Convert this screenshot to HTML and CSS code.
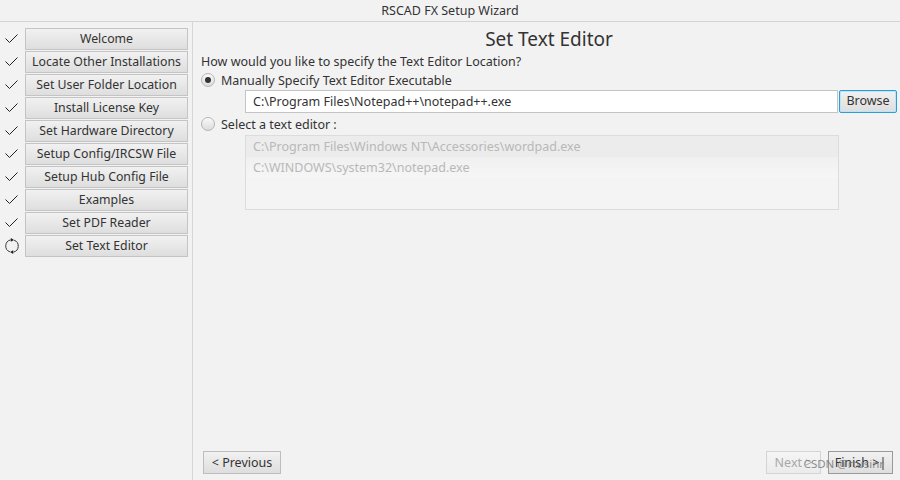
FILE: index.html
```html
<!DOCTYPE html>
<html>
<head>
<meta charset="utf-8">
<link rel="stylesheet" href="styles.css">
</head>
<body>
<div class="window">
  <div class="titlebar">RSCAD FX Setup Wizard</div>
  <div class="main">
    <div class="sidebar">
      <div class="step"><span class="mark"><svg width="16" height="16" viewBox="0 0 16 16"><path d="M1.5 7.5 L5.5 11.5 L13.5 3.5" fill="none" stroke="#222" stroke-width="1"/></svg></span><div class="stepbtn">Welcome</div></div>
      <div class="step"><span class="mark"><svg width="16" height="16" viewBox="0 0 16 16"><path d="M1.5 7.5 L5.5 11.5 L13.5 3.5" fill="none" stroke="#222" stroke-width="1"/></svg></span><div class="stepbtn">Locate Other Installations</div></div>
      <div class="step"><span class="mark"><svg width="16" height="16" viewBox="0 0 16 16"><path d="M1.5 7.5 L5.5 11.5 L13.5 3.5" fill="none" stroke="#222" stroke-width="1"/></svg></span><div class="stepbtn">Set User Folder Location</div></div>
      <div class="step"><span class="mark"><svg width="16" height="16" viewBox="0 0 16 16"><path d="M1.5 7.5 L5.5 11.5 L13.5 3.5" fill="none" stroke="#222" stroke-width="1"/></svg></span><div class="stepbtn">Install License Key</div></div>
      <div class="step"><span class="mark"><svg width="16" height="16" viewBox="0 0 16 16"><path d="M1.5 7.5 L5.5 11.5 L13.5 3.5" fill="none" stroke="#222" stroke-width="1"/></svg></span><div class="stepbtn">Set Hardware Directory</div></div>
      <div class="step"><span class="mark"><svg width="16" height="16" viewBox="0 0 16 16"><path d="M1.5 7.5 L5.5 11.5 L13.5 3.5" fill="none" stroke="#222" stroke-width="1"/></svg></span><div class="stepbtn">Setup Config/IRCSW File</div></div>
      <div class="step"><span class="mark"><svg width="16" height="16" viewBox="0 0 16 16"><path d="M1.5 7.5 L5.5 11.5 L13.5 3.5" fill="none" stroke="#222" stroke-width="1"/></svg></span><div class="stepbtn">Setup Hub Config File</div></div>
      <div class="step"><span class="mark"><svg width="16" height="16" viewBox="0 0 16 16"><path d="M1.5 7.5 L5.5 11.5 L13.5 3.5" fill="none" stroke="#222" stroke-width="1"/></svg></span><div class="stepbtn">Examples</div></div>
      <div class="step"><span class="mark"><svg width="16" height="16" viewBox="0 0 16 16"><path d="M1.5 7.5 L5.5 11.5 L13.5 3.5" fill="none" stroke="#222" stroke-width="1"/></svg></span><div class="stepbtn">Set PDF Reader</div></div>
      <div class="step"><span class="mark"><svg width="16" height="16" viewBox="0 0 16 16"><path d="M6.6 1.9 A6.2 6.2 0 0 0 5.9 13.8 M9.4 14.1 A6.2 6.2 0 0 0 10.1 2.2" fill="none" stroke="#222" stroke-width="0.9"/><path d="M6.8 0 L10 1.9 L6.8 3.8 Z M9.2 16 L6 14.1 L9.2 12.2 Z" fill="#222"/></svg></span><div class="stepbtn">Set Text Editor</div></div>
    </div>
    <div class="content">
      <div class="heading">Set Text Editor</div>
      <div class="question">How would you like to specify the Text Editor Location?</div>
      <div class="radio-row first"><span class="radio checked"><span class="dot"></span></span><span>Manually Specify Text Editor Executable</span></div>
      <div class="path-row">
        <div class="textfield">C:\Program Files\Notepad++\notepad++.exe</div>
        <div class="browse">Browse</div>
      </div>
      <div class="radio-row second"><span class="radio"></span><span>Select a text editor :</span></div>
      <div class="listbox">
        <div class="item first">C:\Program Files\Windows NT\Accessories\wordpad.exe</div>
        <div class="item">C:\WINDOWS\system32\notepad.exe</div>
      </div>
      <div class="spacer"></div>
      <div class="footer">
        <div class="btn prev">&lt; Previous</div>
        <div class="right-btns">
          <div class="btn disabled">Next &gt;</div>
          <div class="btn finish">Finish &gt;|</div>
        </div>
        <span class="watermark">CSDN @rtusinr</span>
      </div>
    </div>
  </div>
</div>
</body>
</html>
```
FILE: styles.css
```css
* { box-sizing: border-box; }
html, body { margin: 0; padding: 0; }
body {
  width: 900px;
  height: 480px;
  background: #f2f2f2;
  font-family: "Noto Sans", "Open Sans", sans-serif;
  font-size: 12.5px;
  color: #333;
  overflow: hidden;
}
.window { width: 900px; height: 480px; display: flex; flex-direction: column; }
.titlebar {
  height: 22px;
  border-bottom: 1px solid #d4d4d4;
  text-align: center;
  line-height: 21px;
  font-size: 12.5px;
  color: #333;
}
.main { flex: 1; display: flex; min-height: 0; }
.sidebar {
  width: 193px;
  border-right: 1px solid #d6d6d6;
  padding-top: 5px;
}
.step { display: flex; align-items: center; height: 23px; }
.mark { width: 25px; display: flex; justify-content: center; padding-right: 1px; }
.mark svg { display: block; overflow: visible; }
.stepbtn {
  width: 163px;
  height: 22px;
  border: 1px solid #c4c4c4;
  background: linear-gradient(#f1f1f1, #dedede);
  text-align: center;
  line-height: 20px;
  font-size: 12.3px;
  color: #333;
  white-space: nowrap;
}
.content {
  flex: 1;
  display: flex;
  flex-direction: column;
  padding: 0 3px 6px 8px;
}
.heading {
  text-align: center;
  font-size: 19px;
  line-height: 24px;
  margin-top: 5px;
  color: #333;
}
.question { line-height: 15px; margin-top: 3px; }
.radio-row { display: flex; align-items: center; height: 18px; gap: 6px; }
.radio-row.first { margin-top: 2px; }
.radio-row.second { margin-top: 1px; height: 20px; }
.radio {
  width: 14px; height: 14px;
  border-radius: 50%;
  border: 1px solid #b5b5b5;
  background: linear-gradient(#fafafa, #dcdcdc);
  display: flex; align-items: center; justify-content: center;
}
.radio .dot { width: 6px; height: 6px; border-radius: 50%; background: #333; }
.path-row { display: flex; margin-left: 44px; height: 23px; margin-top: 1px; }
.textfield {
  flex: 1;
  border: 1px solid #c4c4c4;
  background: #fff;
  line-height: 21px;
  padding-left: 7px;
}
.browse {
  width: 58px;
  margin-left: 1px;
  border: 1px solid #2a9fd6;
  border-radius: 2px;
  background: linear-gradient(#f1f1f1, #dedede);
  text-align: center;
  line-height: 20px;
  box-shadow: inset 0 0 0 1px #bfe3f5;
}
.listbox {
  margin-left: 44px;
  width: 594px;
  height: 75px;
  margin-top: 1px;
  border: 1px solid #dcdcdc;
  background: #f4f4f4;
}
.item { height: 21px; line-height: 21px; padding-left: 7px; color: #b8b8b8; }
.item.first { background: #ececec; }
.item:nth-child(2) { background: linear-gradient(#f0f0f0, #f6f6f6); }
.spacer { flex: 1; }
.footer { display: flex; justify-content: space-between; align-items: center; position: relative; padding-left: 2px; padding-right: 4px; }
.right-btns { display: flex; gap: 7px; }
.btn {
  height: 23px;
  border: 1px solid #bdbdbd;
  background: linear-gradient(#f1f1f1, #dedede);
  line-height: 21px;
  padding: 0 8px;
  color: #333;
  white-space: nowrap;
  text-align: center;
}
.btn.prev { width: 78px; padding: 0; }
.btn.disabled { color: #a8a8a8; border-color: #d4d4d4; background: linear-gradient(#f5f5f5, #ebebeb); width: 55px; padding: 0; }
.btn.finish { width: 65px; border-color: #9a9a9a; padding: 0; }
.watermark {
  position: absolute;
  right: 13px;
  top: 5px;
  font-size: 11.5px;
  color: #7a7a7a;
  opacity: 0.85;
}
```
